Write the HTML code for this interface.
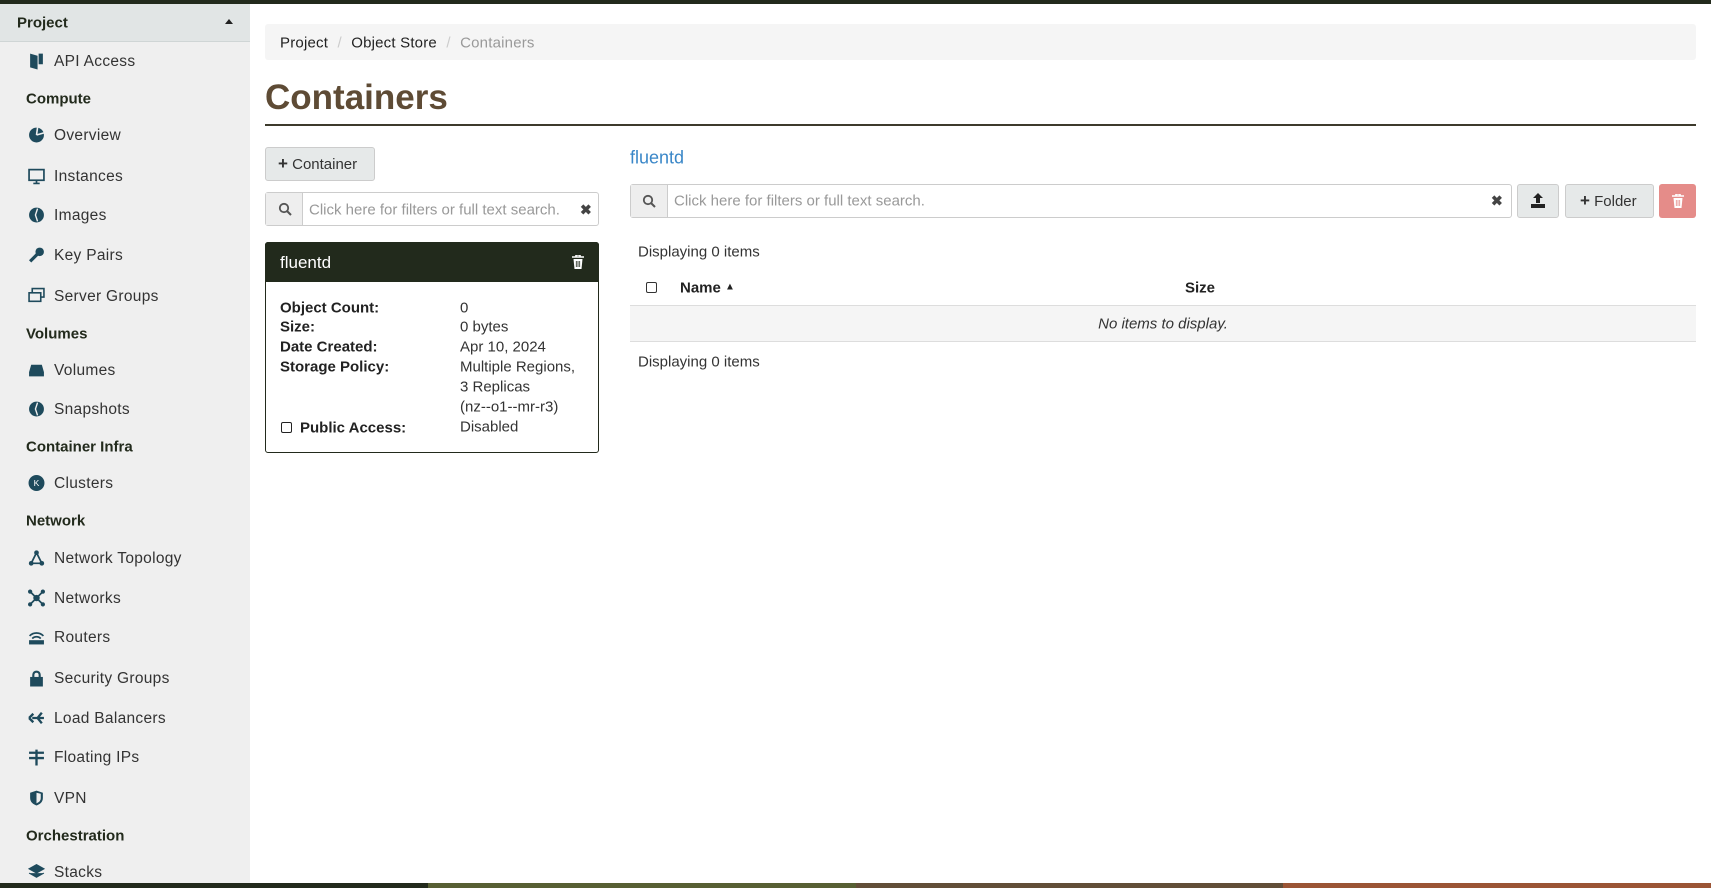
<!DOCTYPE html>
<html><head><meta charset="utf-8"><style>
*{box-sizing:border-box;margin:0;padding:0}
body{width:1711px;height:888px;overflow:hidden;background:#fff;font-family:"Liberation Sans",sans-serif;color:#2b2b2b;position:relative;font-size:15px}
.a{position:absolute;white-space:nowrap}
#top{left:0;top:0;width:1711px;height:4px;background:#222a1c}
#side{left:0;top:4px;width:250px;height:879px;background:#efefef}
#proj{left:0;top:4px;width:250px;height:38px;background:#e1e5e5;border-bottom:1px solid #cfd5d5}
.h{font-weight:bold;color:#222a1c;font-size:15px;left:26px;transform:translateY(-50%);margin-top:1px}
.i{left:54px;font-size:15.5px;color:#333;transform:translateY(-50%);margin-top:1px;letter-spacing:.3px}
.ic{left:28px;width:17px;height:17px;transform:translateY(-50%)}
.bot{top:883px;height:5px;width:428px}
.btn{background:#e6e9e9;border:1px solid #ccc;border-radius:3px}
.inp{border:1px solid #ccc;border-radius:3px;background:#fff}
.ph{color:#999;font-size:15px}
.lbl{font-weight:bold;color:#222;left:280px;font-size:15px;transform:translateY(-50%)}
.val{left:460px;color:#333;font-size:15px;transform:translateY(-50%)}
</style></head><body>
<div class="a" id="top"></div>
<div class="a" id="side"></div>
<div class="a" id="proj"></div>
<div class="a" style="left:17px;top:23px;transform:translateY(-50%);font-weight:bold;font-size:15px;color:#222a1c">Project</div>
<div class="a" style="left:225px;top:19px;border-left:4px solid transparent;border-right:4px solid transparent;border-bottom:5px solid #222"></div>

<svg class="a ic" style="top:61px" viewBox="0 0 16 16"><path d="M2 1l7 2v13l-7-2z M10 1h4v10h-4z" fill="#1e4a5c"/></svg>
<div class="a i" style="top:61px">API Access</div>
<div class="a h" style="top:98px">Compute</div>
<svg class="a ic" style="top:135px" viewBox="0 0 16 16"><circle cx="8" cy="8" r="7" fill="#1e4a5c"/><path d="M8 8L9 1M8 8L15 6" stroke="#efefef" stroke-width="1.5"/></svg>
<div class="a i" style="top:135px">Overview</div>
<svg class="a ic" style="top:176px" viewBox="0 0 16 16"><rect x="1" y="2" width="14" height="10" fill="none" stroke="#1e4a5c" stroke-width="1.6"/><path d="M5 15h6M8 12v3" stroke="#1e4a5c" stroke-width="1.6"/></svg>
<div class="a i" style="top:176px">Instances</div>
<svg class="a ic" style="top:215px" viewBox="0 0 16 16"><circle cx="8" cy="8" r="7" fill="#1e4a5c"/><path d="M9 2L7 8l2 6" stroke="#efefef" stroke-width="1.3" fill="none"/></svg>
<div class="a i" style="top:215px">Images</div>
<svg class="a ic" style="top:255px" viewBox="0 0 16 16"><circle cx="11" cy="5" r="4" fill="#1e4a5c"/><path d="M9 7L2 14" stroke="#1e4a5c" stroke-width="3"/></svg>
<div class="a i" style="top:255px">Key Pairs</div>
<svg class="a ic" style="top:296px" viewBox="0 0 16 16"><rect x="4" y="1" width="11" height="8" fill="none" stroke="#1e4a5c" stroke-width="1.5"/><rect x="1" y="5" width="11" height="8" fill="#efefef" stroke="#1e4a5c" stroke-width="1.5"/></svg>
<div class="a i" style="top:296px">Server Groups</div>
<div class="a h" style="top:333px">Volumes</div>
<svg class="a ic" style="top:370px" viewBox="0 0 16 16"><path d="M3 3h10l2 7v4H1v-4z" fill="#1e4a5c"/></svg>
<div class="a i" style="top:370px">Volumes</div>
<svg class="a ic" style="top:409px" viewBox="0 0 16 16"><circle cx="8" cy="8" r="7" fill="#1e4a5c"/><path d="M9 2L7 8l2 6" stroke="#efefef" stroke-width="1.3" fill="none"/></svg>
<div class="a i" style="top:409px">Snapshots</div>
<div class="a h" style="top:446px">Container Infra</div>
<svg class="a ic" style="top:483px" viewBox="0 0 16 16"><circle cx="8" cy="8" r="7.5" fill="#1e4a5c"/><text x="8" y="11" font-size="8" fill="#fff" text-anchor="middle" font-family="Liberation Sans">K</text></svg>
<div class="a i" style="top:483px">Clusters</div>
<div class="a h" style="top:520px">Network</div>
<svg class="a ic" style="top:558px" viewBox="0 0 16 16"><path d="M8 3L3 13h10z" fill="none" stroke="#1e4a5c" stroke-width="1.6"/><circle cx="8" cy="3" r="2.2" fill="#1e4a5c"/><circle cx="3" cy="13" r="2.2" fill="#1e4a5c"/><circle cx="13" cy="13" r="2.2" fill="#1e4a5c"/></svg>
<div class="a i" style="top:558px">Network Topology</div>
<svg class="a ic" style="top:598px" viewBox="0 0 16 16"><path d="M2 2L14 14M14 2L2 14" stroke="#1e4a5c" stroke-width="1.6"/><circle cx="8" cy="8" r="3" fill="#1e4a5c"/><circle cx="2" cy="2" r="2" fill="#1e4a5c"/><circle cx="14" cy="2" r="2" fill="#1e4a5c"/><circle cx="2" cy="14" r="2" fill="#1e4a5c"/><circle cx="14" cy="14" r="2" fill="#1e4a5c"/></svg>
<div class="a i" style="top:598px">Networks</div>
<svg class="a ic" style="top:637px" viewBox="0 0 16 16"><path d="M1.5 7a9 9 0 0 1 13 0M4 9.5a5.5 5.5 0 0 1 8 0" stroke="#1e4a5c" stroke-width="1.6" fill="none"/><rect x="1" y="11" width="14" height="4" fill="#1e4a5c"/></svg>
<div class="a i" style="top:637px">Routers</div>
<svg class="a ic" style="top:678px" viewBox="0 0 16 16"><path d="M5 7V5a3 3 0 0 1 6 0v2" stroke="#1e4a5c" stroke-width="2" fill="none"/><rect x="2" y="7" width="12" height="9" fill="#1e4a5c"/></svg>
<div class="a i" style="top:678px">Security Groups</div>
<svg class="a ic" style="top:718px" viewBox="0 0 16 16"><path d="M4 8h11M9 8l4-5M9 8l4 5M1 8l4-4M1 8l4 4" stroke="#1e4a5c" stroke-width="2.2" fill="none"/></svg>
<div class="a i" style="top:718px">Load Balancers</div>
<svg class="a ic" style="top:757px" viewBox="0 0 16 16"><path d="M1 4h14M1 9h14M8 1v15" stroke="#1e4a5c" stroke-width="2.2"/></svg>
<div class="a i" style="top:757px">Floating IPs</div>
<svg class="a ic" style="top:798px" viewBox="0 0 16 16"><path d="M8 1l6 2v5c0 4-3 6-6 7-3-1-6-3-6-7V3z" fill="#1e4a5c"/><path d="M8 3v10c2-1 4-2 4-5V4z" fill="#efefef"/></svg>
<div class="a i" style="top:798px">VPN</div>
<div class="a h" style="top:835px">Orchestration</div>
<svg class="a ic" style="top:872px" viewBox="0 0 16 16"><path d="M8 1l7 4-7 4-7-4z M1 9l7 4 7-4" fill="#1e4a5c" stroke="#1e4a5c" stroke-width="1"/></svg>
<div class="a i" style="top:872px">Stacks</div>

<div class="a bot" style="left:0;background:#222a1c"></div>
<div class="a bot" style="left:428px;background:#575f33"></div>
<div class="a bot" style="left:856px;background:#624e38"></div>
<div class="a bot" style="left:1283px;width:428px;background:#9b5535"></div>

<div class="a" style="left:265px;top:24px;width:1431px;height:36px;background:#f5f5f5;border-radius:3px"></div>
<div class="a" style="left:280px;top:43px;transform:translateY(-50%);font-size:15px;color:#222;letter-spacing:.2px">Project <span style="color:#ccc;padding:0 5px">/</span> Object Store <span style="color:#ccc;padding:0 5px">/</span> <span style="color:#999">Containers</span></div>
<div class="a" style="left:265px;top:98px;transform:translateY(-50%);font-size:35px;font-weight:bold;color:#5e4b35">Containers</div>
<div class="a" style="left:265px;top:124px;width:1431px;height:2px;background:#3d3a2c"></div>

<div class="a btn" style="left:265px;top:147px;width:110px;height:34px"></div>
<div class="a" style="left:278px;top:164px;transform:translateY(-50%);font-size:15px;color:#333"><b style="font-size:17px">+</b> Container</div>
<div class="a inp" style="left:265px;top:192px;width:334px;height:34px"></div>
<div class="a" style="left:266px;top:193px;width:37px;height:32px;background:#eee;border-right:1px solid #ccc"></div>
<svg class="a" style="left:278px;top:202px" width="14" height="14" viewBox="0 0 14 14"><circle cx="6" cy="6" r="4.2" fill="none" stroke="#555" stroke-width="1.8"/><path d="M9 9l4 4" stroke="#555" stroke-width="2"/></svg>
<div class="a ph" style="left:309px;top:210px;transform:translateY(-50%)">Click here for filters or full text search.</div>
<div class="a" style="left:580px;top:210px;transform:translateY(-50%);font-size:14px;color:#444;font-weight:bold">✖</div>

<div class="a" style="left:265px;top:242px;width:334px;height:211px;border:1px solid #222a1c;border-radius:3px"></div>
<div class="a" style="left:265px;top:242px;width:334px;height:40px;background:#222a1c;border-radius:3px 3px 0 0"></div>
<div class="a" style="left:280px;top:263px;transform:translateY(-50%);font-size:17px;color:#fff">fluentd</div>
<svg class="a" style="left:572px;top:255px" width="12" height="14" viewBox="0 0 12 14"><path d="M0 2h12M4 2V0h4v2" stroke="#fff" stroke-width="1.6" fill="none"/><path d="M1.5 4h9l-1 10h-7z" fill="#fff"/><path d="M4.3 6v6M6 6v6M7.7 6v6" stroke="#222a1c" stroke-width=".8"/></svg>
<div class="a lbl" style="top:308px">Object Count:</div><div class="a val" style="top:308px">0</div>
<div class="a lbl" style="top:327px">Size:</div><div class="a val" style="top:327px">0 bytes</div>
<div class="a lbl" style="top:347px">Date Created:</div><div class="a val" style="top:347px">Apr 10, 2024</div>
<div class="a lbl" style="top:367px">Storage Policy:</div><div class="a val" style="top:367px">Multiple Regions,</div>
<div class="a val" style="top:387px">3 Replicas</div>
<div class="a val" style="top:407px">(nz--o1--mr-r3)</div>
<div class="a" style="left:281px;top:422px;width:11px;height:11px;border:1.5px solid #222;border-radius:2px"></div>
<div class="a lbl" style="left:300px;top:428px">Public Access:</div><div class="a val" style="top:427px">Disabled</div>

<div class="a" style="left:630px;top:158px;transform:translateY(-50%);font-size:18px;color:#3a87c8">fluentd</div>
<div class="a inp" style="left:630px;top:184px;width:882px;height:34px"></div>
<div class="a" style="left:631px;top:185px;width:37px;height:32px;background:#eee;border-right:1px solid #ccc"></div>
<svg class="a" style="left:642px;top:194px" width="14" height="14" viewBox="0 0 14 14"><circle cx="6" cy="6" r="4.2" fill="none" stroke="#555" stroke-width="1.8"/><path d="M9 9l4 4" stroke="#555" stroke-width="2"/></svg>
<div class="a ph" style="left:674px;top:201px;transform:translateY(-50%)">Click here for filters or full text search.</div>
<div class="a" style="left:1491px;top:201px;transform:translateY(-50%);font-size:14px;color:#444;font-weight:bold">✖</div>
<div class="a btn" style="left:1517px;top:184px;width:42px;height:34px"></div>
<svg class="a" style="left:1531px;top:193px" width="14" height="15" viewBox="0 0 14 15"><path d="M7 0l5 5H9v5H5V5H2z" fill="#222"/><rect x="0" y="11" width="14" height="4" fill="#222"/></svg>
<div class="a btn" style="left:1565px;top:184px;width:89px;height:34px"></div>
<div class="a" style="left:1580px;top:201px;transform:translateY(-50%);font-size:15px;color:#333"><b style="font-size:17px">+</b> Folder</div>
<div class="a" style="left:1659px;top:184px;width:37px;height:34px;background:#e58c89;border-radius:3px"></div>
<svg class="a" style="left:1672px;top:194px" width="12" height="14" viewBox="0 0 12 14"><path d="M0 2h12M4 2V0h4v2" stroke="#fff" stroke-width="1.6" fill="none"/><path d="M1.5 4h9l-1 10h-7z" fill="#fff"/><path d="M4.3 6v6M6 6v6M7.7 6v6" stroke="#e58c89" stroke-width=".8"/></svg>

<div class="a" style="left:638px;top:252px;transform:translateY(-50%);color:#333">Displaying 0 items</div>
<div class="a" style="left:646px;top:282px;width:11px;height:11px;border:1.5px solid #333;border-radius:2px"></div>
<div class="a" style="left:680px;top:288px;transform:translateY(-50%);font-weight:bold;color:#222">Name <span style="font-size:10px;vertical-align:3px">▲</span></div>
<div class="a" style="left:1185px;top:288px;transform:translateY(-50%);font-weight:bold;color:#222">Size</div>
<div class="a" style="left:630px;top:305px;width:1066px;height:37px;background:#f5f5f5;border-top:1px solid #ddd;border-bottom:1px solid #ddd"></div>
<div class="a" style="left:1163px;top:324px;transform:translate(-50%,-50%);font-style:italic;color:#333">No items to display.</div>
<div class="a" style="left:638px;top:362px;transform:translateY(-50%);color:#333">Displaying 0 items</div>
</body></html>
